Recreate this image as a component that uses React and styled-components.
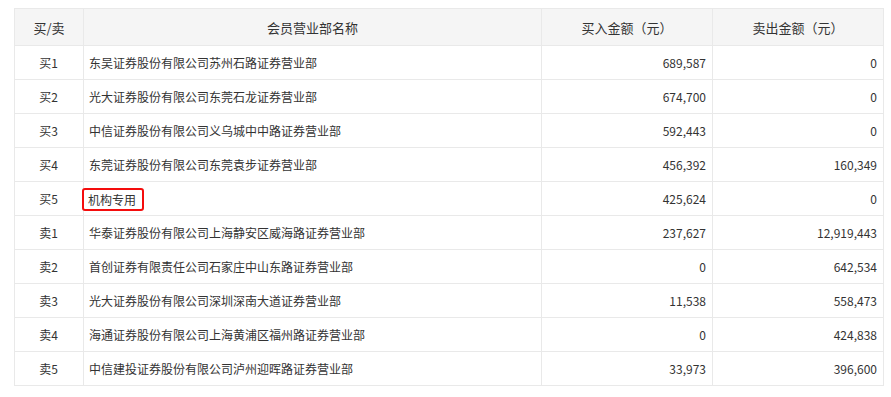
import styled, { createGlobalStyle } from "styled-components";

const GlobalStyle = createGlobalStyle`
body {
  margin: 0;
  background: #fff;
  font-family: "Microsoft YaHei", "Noto Sans CJK SC", sans-serif;
}
`

const rows = [
  { side: "买1", name: "东吴证券股份有限公司苏州石路证券营业部", buy: "689,587", sell: "0" },
  { side: "买2", name: "光大证券股份有限公司东莞石龙证券营业部", buy: "674,700", sell: "0" },
  { side: "买3", name: "中信证券股份有限公司义乌城中中路证券营业部", buy: "592,443", sell: "0" },
  { side: "买4", name: "东莞证券股份有限公司东莞袁步证券营业部", buy: "456,392", sell: "160,349" },
  { side: "买5", name: "机构专用", buy: "425,624", sell: "0", mark: true },
  { side: "卖1", name: "华泰证券股份有限公司上海静安区威海路证券营业部", buy: "237,627", sell: "12,919,443" },
  { side: "卖2", name: "首创证券有限责任公司石家庄中山东路证券营业部", buy: "0", sell: "642,534" },
  { side: "卖3", name: "光大证券股份有限公司深圳深南大道证券营业部", buy: "11,538", sell: "558,473" },
  { side: "卖4", name: "海通证券股份有限公司上海黄浦区福州路证券营业部", buy: "0", sell: "424,838" },
  { side: "卖5", name: "中信建投证券股份有限公司泸州迎晖路证券营业部", buy: "33,973", sell: "396,600" },
]

export default function App() {
  return (
    <Page>
      <GlobalStyle />
      <Tabela>
        <colgroup>
          <col style={{ width: 69 }} />
          <col style={{ width: 458 }} />
          <col style={{ width: 171 }} />
          <col style={{ width: 171 }} />
        </colgroup>
        <thead>
          <tr>
            <Th>买/卖</Th>
            <Th>会员营业部名称</Th>
            <Th>买入金额（元）</Th>
            <Th>卖出金额（元）</Th>
          </tr>
        </thead>
        <tbody>
          {rows.map((r) => (
            <tr key={r.side}>
              <Td align="center">{r.side}</Td>
              <Td align="left">
                {r.mark ? <Marcado>{r.name}</Marcado> : r.name}
              </Td>
              <Td align="right">{r.buy}</Td>
              <Td align="right">{r.sell}</Td>
            </tr>
          ))}
        </tbody>
      </Tabela>
    </Page>
  )
}

const Page = styled.div`
padding: 8px 8px 0 14px;
`

const Tabela = styled.table`
width: 869px;
border-collapse: collapse;
table-layout: fixed;
font-size: 12px;
color: #333;
`

const Th = styled.th`
height: 36px;
padding: 0 6px;
background: #f5f5f5;
border: 1px solid #e9e9e9;
font-weight: normal;
font-size: 13px;
color: #333;
text-align: center;
`

const Td = styled.td`
height: 33px;
padding: 0 6px 0 5px;
border: 1px solid #e9e9e9;
text-align: ${props => props.align};
white-space: nowrap;
`

const Marcado = styled.span`
display: inline-block;
vertical-align: middle;
margin: 2px 0 0 -7px;
padding: 0 6px 0 4px;
border: 2px solid #f40d0d;
border-radius: 3px;
line-height: 19px;
`
